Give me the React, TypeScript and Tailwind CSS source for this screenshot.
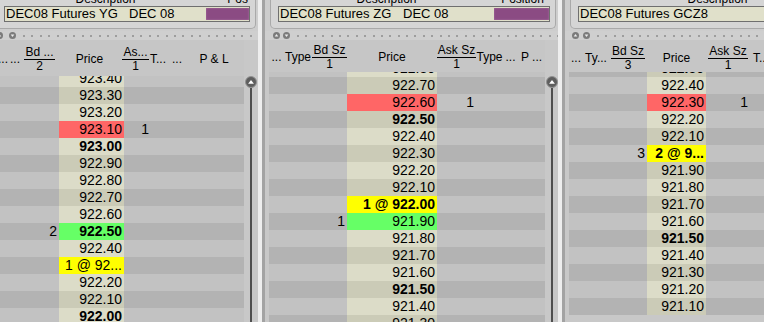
import type { ReactNode } from 'react'

type Hl = 'red' | 'green' | 'yellow'
type Mark = { hl?: Hl; bid?: string; ask?: string; label?: string }
type Col = { w: string; kind?: 'bid' | 'price' | 'ask'; head: ReactNode; hc?: string }

type PanelDef = {
  width: string
  mainW: string
  scrollW?: string
  edge: boolean
  frame: string
  toolbar: string
  desc: string
  sub?: string
  posW?: string
  posHead?: string
  posAlign?: string
  headH: string
  headPad: string
  offset: string
  cols: Col[]
  start: number
  count: number
  marks: Record<string, Mark>
}

function Frac({ top, bottom }: { top: string; bottom: string }) {
  return (
    <div className="inline-flex flex-col items-stretch">
      <span className="px-[1px] text-center leading-[13px] whitespace-nowrap">{top}</span>
      <span className="h-px bg-black" />
      <span className="text-center leading-[13px]">{bottom}</span>
    </div>
  )
}

function One({ text }: { text: string }) {
  return <span className="mt-[7px] leading-[13px] whitespace-nowrap">{text}</span>
}

function Knob({ up }: { up?: boolean }) {
  return (
    <svg width="7" height="7" viewBox="0 0 7 7" className="shrink-0">
      <circle cx="3.5" cy="3.5" r="3.5" fill="#7b7b7b" />
      <path d={up ? 'M1.7 4.6 L3.5 2.1 L5.3 4.6 Z' : 'M1.7 2.4 L3.5 4.9 L5.3 2.4 Z'} fill="#ececec" />
    </svg>
  )
}

function Toolbar({ lead }: { lead: string }) {
  return (
    <div className="flex h-[9px] shrink-0 items-center overflow-hidden bg-[#cfcfcf]">
      <div className={`flex shrink-0 items-center ${lead}`}>
        <Knob up />
        <Knob />
      </div>
      <div className="ml-[7px] flex shrink-0 items-center gap-[6.4px]">
        {Array.from({ length: 40 }, (_, i) => (
          <span key={i} className="h-[2px] w-[2px] shrink-0 rounded-full bg-[#8d8d8d]" />
        ))}
      </div>
    </div>
  )
}

function Top({ d }: { d: PanelDef }) {
  return (
    <div className="h-[31px] shrink-0 bg-[#cdcdcd]">
      <div className={`h-[29px] rounded-b-[5px] border-x border-b border-[#a9a9a9] bg-[#d5d5d5] pl-[7px] pr-[5px] ${d.frame}`}>
        <div className="flex h-[6px] overflow-hidden text-[12px] leading-[12px]">
          <div className="mt-[-7px] flex-1 text-center">Description</div>
          {d.posW && <div className={`${d.posW} mt-[-7px] whitespace-nowrap ${d.posAlign}`}>{d.posHead}</div>}
        </div>
        <div className="flex h-[16px] border border-[#6f6f6f] bg-[#e0e0ca] text-[13px] leading-[14px]">
          <div className="flex flex-1 overflow-hidden pl-[1px] whitespace-nowrap">
            <span className="w-[123px] shrink-0">{d.desc}</span>
            {d.sub && <span>{d.sub}</span>}
          </div>
          {d.posW && <div className={`${d.posW} my-[1px] shrink-0 bg-[#8b4b83] shadow-[inset_0_0_2px_#b07aa8]`} />}
        </div>
      </div>
    </div>
  )
}

function Scroll({ w }: { w: string }) {
  return (
    <div className={`${w} flex shrink-0 flex-col items-center`}>
      <div className="h-[36px] shrink-0" />
      <svg width="12" height="12" viewBox="0 0 12 12" className="shrink-0">
        <circle cx="6" cy="6" r="5.5" fill="#5e5e5e" stroke="#929292" />
        <path d="M3.1 7.7 L6 4.1 L8.9 7.7 Z" fill="#ffffff" />
      </svg>
      <div className="w-[2px] flex-1 bg-[#4f4f4f]" />
    </div>
  )
}

const priceBg: Record<Hl, string> = {
  red: 'bg-[#ff6666]',
  green: 'bg-[#66ff66]',
  yellow: 'bg-[#ffff00]',
}

function Rows({ d }: { d: PanelDef }) {
  const prices = Array.from({ length: d.count }, (_, i) => Math.round(d.start * 10) - i)
  return (
    <>
      {prices.map((t) => {
        const key = (t / 10).toFixed(2)
        const m = d.marks[key] ?? {}
        const dark = t % 2 !== 0
        const bold = t % 5 === 0
        return (
          <div key={key} className={`flex h-[17px] text-[14px] leading-[17px] ${dark ? 'bg-[#b3b3b3]' : 'bg-[#c2c2c2]'}`}>
            {d.cols.map((c, i) => {
              if (c.kind === 'price')
                return (
                  <div
                    key={i}
                    className={`${c.w} shrink-0 overflow-hidden pr-[2px] text-right whitespace-nowrap ${bold ? 'font-bold' : ''} ${
                      m.hl ? priceBg[m.hl] : dark ? 'bg-[#cbcbb7]' : 'bg-[#dcdcc8]'
                    }`}
                  >
                    {m.label ?? key}
                  </div>
                )
              const v = c.kind === 'bid' ? m.bid : c.kind === 'ask' ? m.ask : undefined
              return (
                <div key={i} className={`${c.w} shrink-0 pr-[2px] text-right`}>
                  {v}
                </div>
              )
            })}
          </div>
        )
      })}
    </>
  )
}

function Panel({ d }: { d: PanelDef }) {
  return (
    <div className={`${d.width} flex shrink-0 flex-col bg-[#c8c8c8]`}>
      <Top d={d} />
      <Toolbar lead={d.toolbar} />
      <div className="flex min-h-0 flex-1">
        {d.edge && <div className="w-[4px] shrink-0" />}
        <div className={`${d.mainW} flex shrink-0 flex-col`}>
          <div className={`flex ${d.headH} ${d.headPad} shrink-0 bg-[#c6c6c6] text-[12px]`}>
            {d.cols.map((c, i) => (
              <div key={i} className={`${c.w} flex shrink-0 items-start ${c.hc ?? 'justify-center'}`}>
                {c.head}
              </div>
            ))}
          </div>
          <div className="min-h-0 flex-1 overflow-hidden">
            <div className={d.offset}>
              <Rows d={d} />
            </div>
          </div>
        </div>
        {d.scrollW && <Scroll w={d.scrollW} />}
      </div>
    </div>
  )
}

const panels: PanelDef[] = [
  {
    width: 'w-[258px]',
    mainW: 'w-[244px]',
    scrollW: 'w-[14px]',
    edge: false,
    frame: 'ml-[-4px] mr-[2px]',
    toolbar: 'ml-[-4px] gap-[6px]',
    desc: 'DEC08 Futures YG',
    sub: 'DEC 08',
    posW: 'w-[43px]',
    posHead: 'Pos',
    posAlign: 'text-right pr-[2px]',
    headH: 'h-[36px]',
    headPad: 'pt-[6px]',
    offset: 'mt-[-6px]',
    cols: [
      { w: 'w-[9px]', head: <One text="..." />, hc: 'justify-start ml-[-2px]' },
      { w: 'w-[15px]', head: <One text="..." />, hc: 'justify-start pl-[3px]' },
      { w: 'w-[35px]', kind: 'bid', head: <Frac top="Bd ..." bottom="2" /> },
      { w: 'w-[65px]', kind: 'price', head: <One text="Price" /> },
      { w: 'w-[27px]', kind: 'ask', head: <Frac top="As..." bottom="1" /> },
      { w: 'w-[19px]', head: <One text="T..." />, hc: 'justify-start pl-[1px]' },
      { w: 'w-[18px]', head: <One text="..." /> },
      { w: 'w-[56px]', head: <One text="P & L" /> },
    ],
    start: 923.4,
    count: 15,
    marks: {
      '923.10': { hl: 'red', ask: '1' },
      '922.50': { hl: 'green', bid: '2' },
      '922.30': { hl: 'yellow', label: '1 @ 92...' },
    },
  },
  {
    width: 'w-[293px]',
    mainW: 'w-[276px]',
    scrollW: 'w-[13px]',
    edge: true,
    frame: 'ml-[5px] mr-[2px]',
    toolbar: 'ml-[8px] gap-[3px]',
    desc: 'DEC08 Futures ZG',
    sub: 'DEC 08',
    posW: 'w-[55px]',
    posHead: 'Position',
    posAlign: 'text-center',
    headH: 'h-[32px]',
    headPad: 'pt-[4px]',
    offset: 'mt-[-12px]',
    cols: [
      { w: 'w-[15px]', head: <One text="..." /> },
      { w: 'w-[28px]', head: <One text="Type" /> },
      { w: 'w-[35px]', kind: 'bid', head: <Frac top="Bd Sz" bottom="1" /> },
      { w: 'w-[90px]', kind: 'price', head: <One text="Price" /> },
      { w: 'w-[39px]', kind: 'ask', head: <Frac top="Ask Sz" bottom="1" /> },
      { w: 'w-[27px]', head: <One text="Type" /> },
      { w: 'w-[15px]', head: <One text="..." /> },
      { w: 'w-[27px]', head: <One text="P ..." /> },
    ],
    start: 922.8,
    count: 16,
    marks: {
      '922.60': { hl: 'red', ask: '1' },
      '922.00': { hl: 'yellow', label: '1 @ 922.00' },
      '921.90': { hl: 'green', bid: '1' },
    },
  },
  {
    width: 'w-[300px]',
    mainW: 'w-[260px]',
    edge: true,
    frame: 'ml-[5px] mr-[2px]',
    toolbar: 'ml-[7px] gap-[4px]',
    desc: 'DEC08 Futures GCZ8',
    headH: 'h-[32px]',
    headPad: 'pt-[5px]',
    offset: 'mt-[-12px]',
    cols: [
      { w: 'w-[14px]', head: <One text="..." /> },
      { w: 'w-[26px]', head: <One text="Ty..." /> },
      { w: 'w-[38px]', kind: 'bid', head: <Frac top="Bd Sz" bottom="3" /> },
      { w: 'w-[59px]', kind: 'price', head: <One text="Price" /> },
      { w: 'w-[44px]', kind: 'ask', head: <Frac top="Ask Sz" bottom="1" /> },
      { w: 'w-[79px]', head: <One text="T..." />, hc: 'justify-start pl-[3px]' },
    ],
    start: 922.5,
    count: 15,
    marks: {
      '922.30': { hl: 'red', ask: '1' },
      '922.00': { hl: 'yellow', bid: '3', label: '2 @ 9...' },
    },
  },
]

function Splitter() {
  return (
    <div className="flex shrink-0">
      <div className="w-[4px] bg-[#eeeeee]" />
      <div className="w-[3px] bg-[#a3a3a3]" />
    </div>
  )
}

export default function App() {
  return (
    <div className="flex h-[322px] w-[764px] overflow-hidden bg-[#c8c8c8] font-['Liberation_Sans',Arial,sans-serif] text-black">
      <Panel d={panels[0]} />
      <Splitter />
      <Panel d={panels[1]} />
      <Splitter />
      <Panel d={panels[2]} />
    </div>
  )
}
